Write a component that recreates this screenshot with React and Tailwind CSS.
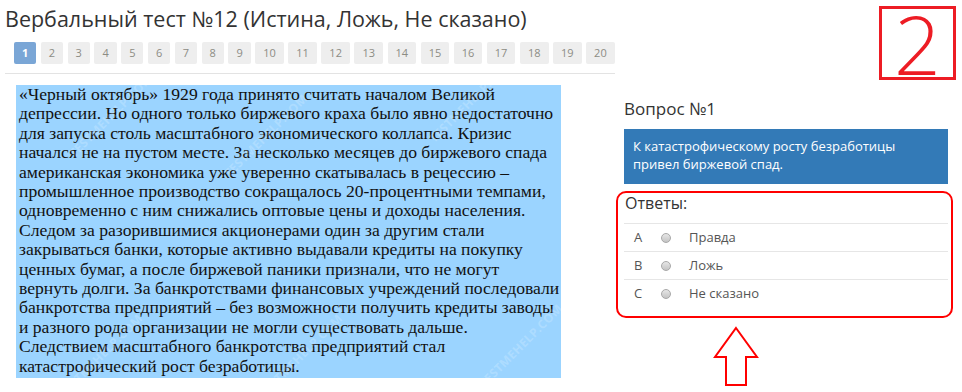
import React from "react";

const PAGES = Array.from({ length: 20 }, (_, i) => i + 1);

const PASSAGE = [
  "«Черный октябрь» 1929 года принято считать началом Великой",
  "депрессии. Но одного только биржевого краха было явно недостаточно",
  "для запуска столь масштабного экономического коллапса. Кризис",
  "начался не на пустом месте. За несколько месяцев до биржевого спада",
  "американская экономика уже уверенно скатывалась в рецессию –",
  "промышленное производство сокращалось 20-процентными темпами,",
  "одновременно с ним снижались оптовые цены и доходы населения.",
  "Следом за разорившимися акционерами один за другим стали",
  "закрываться банки, которые активно выдавали кредиты на покупку",
  "ценных бумаг, а после биржевой паники признали, что не могут",
  "вернуть долги. За банкротствами финансовых учреждений последовали",
  "банкротства предприятий – без возможности получить кредиты заводы",
  "и разного рода организации не могли существовать дальше.",
  "Следствием масштабного банкротства предприятий стал",
  "катастрофический рост безработицы.",
];

const ANSWERS = [
  { key: "A", label: "Правда" },
  { key: "B", label: "Ложь" },
  { key: "C", label: "Не сказано" },
];

// faint watermark stamps over the scanned passage
const MARKS = [
  { left: 39, top: 22 },
  { left: 194, top: 42 },
  { left: 399, top: 7 },
  { left: 29, top: 262 },
  { left: 229, top: 262 },
  { left: 449, top: 252 },
];

const SANS = { fontFamily: '"Open Sans", "Liberation Sans", sans-serif' };
const SERIF = { fontFamily: '"Liberation Serif", "Times New Roman", serif' };

function Pagination() {
  return (
    <div className="flex gap-[4.5px] pl-[14px] pt-[9px]">
      {PAGES.map((page) => (
        <span
          key={page}
          className={
            page === 1
              ? "flex h-[22px] min-w-[22px] items-center justify-center rounded-[2px] bg-[#7aa6d6] px-[8px] text-[11px] font-bold text-white"
              : "flex h-[22px] min-w-[22px] items-center justify-center rounded-[2px] bg-[#eeeeee] px-[8px] text-[11px] text-[#8c8c84]"
          }
        >
          {page}
        </span>
      ))}
    </div>
  );
}

function Radio() {
  return (
    <span className="block h-[10px] w-[10px] rounded-full border border-[#a8a8a8] bg-gradient-to-b from-[#e6e6e6] to-[#c4c4c4]" />
  );
}

export default function App() {
  return (
    <div className="relative h-[392px] w-[962px] overflow-hidden bg-white text-[#333]" style={SANS}>
      <div className="flex">
        <div className="w-[616px] shrink-0">
          <h1 className="pl-[5px] pt-[5px] text-[21.5px] leading-[28px] text-[#333]">
            Вербальный тест №12 (Истина, Ложь, Не сказано)
          </h1>
          <Pagination />
          <div className="ml-[5px] mt-[9px] h-px w-[610px] bg-[#e3e3e3]" />

          <div className="relative ml-[16px] mt-[11px] h-[293px] w-[545px] overflow-hidden bg-[#9bd4ff] pl-[3px]">
            <div className="text-[17.6px] leading-[19.4px] text-[#111]" style={SERIF}>
              {PASSAGE.map((line) => (
                <div key={line} className="whitespace-nowrap">
                  {line}
                </div>
              ))}
            </div>
            {MARKS.map((mark) => (
              <span
                key={`${mark.left}-${mark.top}`}
                className="absolute -rotate-45 text-[12px] font-bold tracking-wide text-white/20"
                style={{ left: mark.left, top: mark.top }}
              >
                TESTMEHELP.COM
              </span>
            ))}
          </div>
        </div>

        <div className="w-[337px] shrink-0 pt-[97px]">
          <div className="pl-[8px] text-[17px] leading-[24px] text-[#333]">Вопрос №1</div>
          <div className="ml-[8px] mr-[5px] mt-[8px] h-[55px] bg-[#337ab7] pl-[9px] pt-[8px] text-[13px] leading-[18px] text-white">
            К катастрофическому росту безработицы
            <br />
            привел биржевой спад.
          </div>

          <div className="mt-[7px] rounded-[10px] border-2 border-[#ff0000] pb-[9px] pl-[6px] pr-[3px]">
            <div className="pl-[1px] text-[16px] leading-[20px] text-[#333]">Ответы:</div>
            <div className="mt-[10px]">
              {ANSWERS.map((answer) => (
                <div
                  key={answer.key}
                  className="flex h-[28px] items-center border-t border-[#e6e6e6] text-[13px] text-[#555]"
                >
                  <span className="w-[37px] pl-[10px]">{answer.key}</span>
                  <Radio />
                  <span className="ml-[18px]">{answer.label}</span>
                </div>
              ))}
            </div>
          </div>
        </div>
      </div>

      {/* annotation: page number */}
      <div className="absolute left-[879px] top-[6px] flex h-[74px] w-[77px] items-center justify-center border-[3px] border-[#ed1c24]">
        <span className="text-[82px] font-light leading-[70px] text-[#ed1c24]">2</span>
      </div>

      {/* annotation: arrow pointing at answers */}
      <svg className="absolute left-[713px] top-[326px]" width="46" height="62" viewBox="0 0 46 62">
        <polygon
          points="23,2 44,31 33,31 33,59 13,59 13,31 2,31"
          fill="none"
          stroke="#ff0000"
          strokeWidth="2"
        />
      </svg>
    </div>
  );
}
